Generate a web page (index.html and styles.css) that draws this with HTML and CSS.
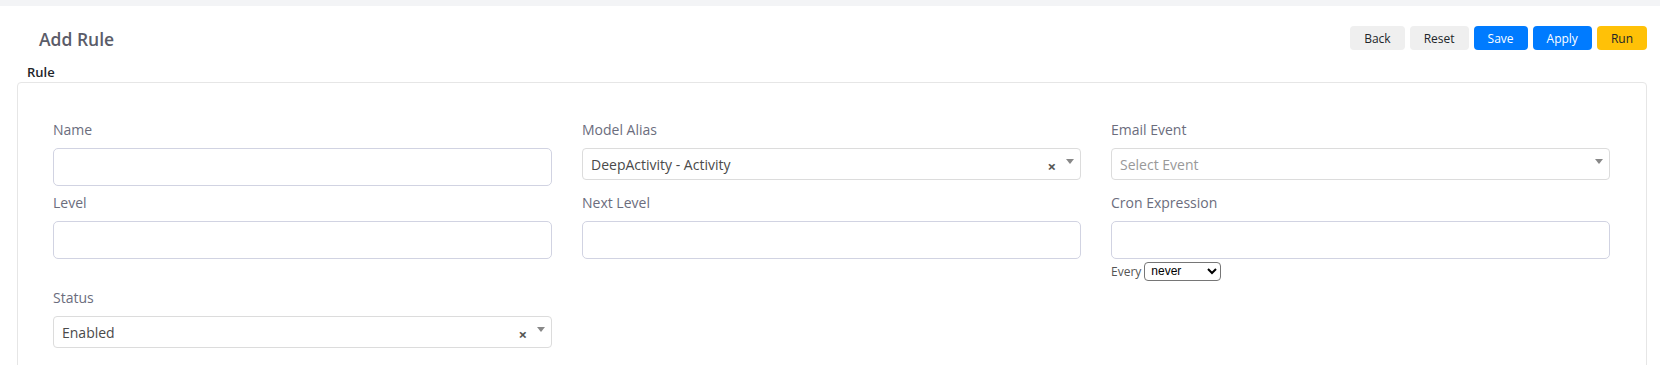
FILE: index.html
```html
<!DOCTYPE html>
<html lang="en">
<head>
    <meta charset="UTF-8">
    <meta name="viewport" content="width=device-width, initial-scale=1.0">
    <title>Add Rule</title>
    <link rel="stylesheet" href="styles.css">
</head>
<body>
    <div class="topbar"></div>
    <div class="page">
        <div class="page-head">
            <h1 class="page-title">Add Rule</h1>
            <div class="actions">
                <button class="btn btn-light">Back</button>
                <button class="btn btn-light">Reset</button>
                <button class="btn btn-primary">Save</button>
                <button class="btn btn-primary">Apply</button>
                <button class="btn btn-warning">Run</button>
            </div>
        </div>
        <div class="section-title">Rule</div>
        <div class="card">
            <div class="form-grid">
                <div class="form-group">
                    <label for="name">Name</label>
                    <input type="text" id="name" class="form-control">
                </div>
                <div class="form-group">
                    <label>Model Alias</label>
                    <div class="select-box">
                        <span class="select-text">DeepActivity - Activity</span>
                        <span class="select-clear">&times;</span>
                        <span class="select-arrow"></span>
                    </div>
                </div>
                <div class="form-group">
                    <label>Email Event</label>
                    <div class="select-box">
                        <span class="select-text placeholder">Select Event</span>
                        <span class="select-arrow"></span>
                    </div>
                </div>
                <div class="form-group">
                    <label for="level">Level</label>
                    <input type="text" id="level" class="form-control">
                </div>
                <div class="form-group">
                    <label for="next-level">Next Level</label>
                    <input type="text" id="next-level" class="form-control">
                </div>
                <div class="form-group">
                    <label for="cron">Cron Expression</label>
                    <input type="text" id="cron" class="form-control">
                    <div class="cron-help">
                        <span>Every</span>
                        <select class="cron-select">
                            <option>never</option>
                            <option>minute</option>
                            <option>hour</option>
                            <option>day</option>
                        </select>
                    </div>
                </div>
                <div class="form-group">
                    <label>Status</label>
                    <div class="select-box">
                        <span class="select-text">Enabled</span>
                        <span class="select-clear">&times;</span>
                        <span class="select-arrow"></span>
                    </div>
                </div>
            </div>
        </div>
    </div>
</body>
</html>
```

FILE: styles.css
```css
body {
    margin: 0;
    font-family: 'Open Sans', 'Noto Sans', sans-serif;
    background: #fff;
    color: #6b6d7d;
}

.topbar {
    height: 6px;
    background: #f3f4f6;
}

.page {
    padding: 0 13px 0 17px;
}

.page-head {
    display: flex;
    justify-content: space-between;
    align-items: flex-start;
    padding-top: 20px;
}

.page-title {
    margin: 0 0 0 22px;
    font-size: 17.5px;
    line-height: 27px;
    font-weight: 600;
    color: #5a5c69;
}

.actions {
    display: flex;
    gap: 5px;
}

.btn {
    height: 24px;
    padding: 0 14px;
    border: none;
    border-radius: 4px;
    font-family: inherit;
    font-size: 12px;
    cursor: pointer;
}

.btn-light {
    background: #efefef;
    color: #212529;
}

.btn-primary {
    background: #007bff;
    color: #fff;
}

.btn-warning {
    background: #ffc107;
    color: #212529;
}

.section-title {
    margin: 9px 0 0 10px;
    font-size: 13px;
    line-height: 20px;
    font-weight: 600;
    color: #212529;
}

.card {
    border: 1px solid #e6e6e6;
    border-radius: 4px;
    padding: 36px 36px 20px 35px;
}

.form-grid {
    display: grid;
    grid-template-columns: repeat(3, 1fr);
    column-gap: 30px;
    row-gap: 6px;
    align-items: start;
}

.form-group label {
    display: block;
    font-size: 14px;
    line-height: 21px;
    margin-bottom: 8px;
}

.form-control {
    display: block;
    width: 100%;
    height: 38px;
    box-sizing: border-box;
    border: 1px solid #d1d3e2;
    border-radius: 5px;
    padding: 6px 12px;
    font-family: inherit;
    font-size: 14px;
}

.select-box {
    display: flex;
    align-items: center;
    height: 32px;
    box-sizing: border-box;
    border: 1px solid #dcdcdc;
    border-radius: 4px;
    padding: 0 6px 0 8px;
}

.select-text {
    flex: 1;
    font-size: 14px;
    color: #4a4a4a;
}

.select-text.placeholder {
    color: #999;
}

.select-clear {
    margin: 5px 10px 0 0;
    font-size: 15px;
    font-weight: bold;
    line-height: 1;
    color: #555;
}

.select-arrow {
    width: 0;
    height: 0;
    margin-top: -6px;
    border-style: solid;
    border-width: 5px 4px 0 4px;
    border-color: #888 transparent transparent transparent;
}

.cron-help {
    display: flex;
    align-items: center;
    gap: 3px;
    height: 20px;
    margin-top: 2px;
    font-size: 12px;
    color: #555;
}

.cron-select {
    width: 77px;
    height: 19px;
    padding: 0 2px;
    font-size: 12px;
    border: 1px solid #767676;
    border-radius: 4px;
    background: #fff;
    color: #000;
}
```
